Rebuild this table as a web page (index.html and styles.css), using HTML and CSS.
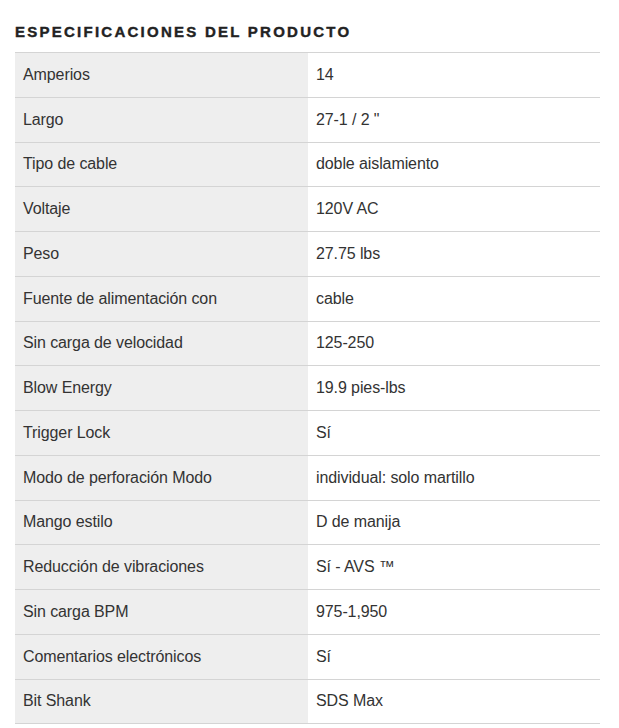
FILE: index.html
```html
<!DOCTYPE html>
<html lang="es">
<head>
<meta charset="utf-8">
<link rel="stylesheet" href="styles.css">
</head>
<body>
<section class="specs">
  <h2 class="specs-title">ESPECIFICACIONES DEL PRODUCTO</h2>
  <table class="specs-table">
    <tbody>
      <tr><td>Amperios</td><td>14</td></tr>
      <tr><td>Largo</td><td>27-1 / 2 "</td></tr>
      <tr><td>Tipo de cable</td><td>doble aislamiento</td></tr>
      <tr><td>Voltaje</td><td>120V AC</td></tr>
      <tr><td>Peso</td><td>27.75 lbs</td></tr>
      <tr><td>Fuente de alimentación con</td><td>cable</td></tr>
      <tr><td>Sin carga de velocidad</td><td>125-250</td></tr>
      <tr><td>Blow Energy</td><td>19.9 pies-lbs</td></tr>
      <tr><td>Trigger Lock</td><td>Sí</td></tr>
      <tr><td>Modo de perforación Modo</td><td>individual: solo martillo</td></tr>
      <tr><td>Mango estilo</td><td>D de manija</td></tr>
      <tr><td>Reducción de vibraciones</td><td>Sí - AVS ™</td></tr>
      <tr><td>Sin carga BPM</td><td>975-1,950</td></tr>
      <tr><td>Comentarios electrónicos</td><td>Sí</td></tr>
      <tr><td>Bit Shank</td><td>SDS Max</td></tr>
    </tbody>
  </table>
</section>
</body>
</html>
```
FILE: styles.css
```css
html, body {
  margin: 0;
  padding: 0;
  background: #fff;
}
body {
  font-family: "Liberation Sans", Arial, sans-serif;
  color: #333;
}
.specs {
  padding: 22px 19px 0 15px;
}
.specs-title {
  margin: 0 0 11px 0;
  font-family: "Liberation Sans", Arial, sans-serif;
  font-size: 15px;
  line-height: 19px;
  font-weight: bold;
  letter-spacing: 2.25px;
  -webkit-text-stroke: 0.4px #222;
  color: #222;
}
.specs-table {
  width: 100%;
  border-collapse: collapse;
  font-size: 16px;
  letter-spacing: -0.1px;
}
.specs-table td {
  border-top: 1px solid #d4d4d4;
  border-bottom: 1px solid #d4d4d4;
  height: 43.75px;
  padding: 0 8px;
  vertical-align: middle;
  line-height: 20px;
}
.specs-table td:first-child {
  background: #eeeeee;
  width: 277px;
}
```
